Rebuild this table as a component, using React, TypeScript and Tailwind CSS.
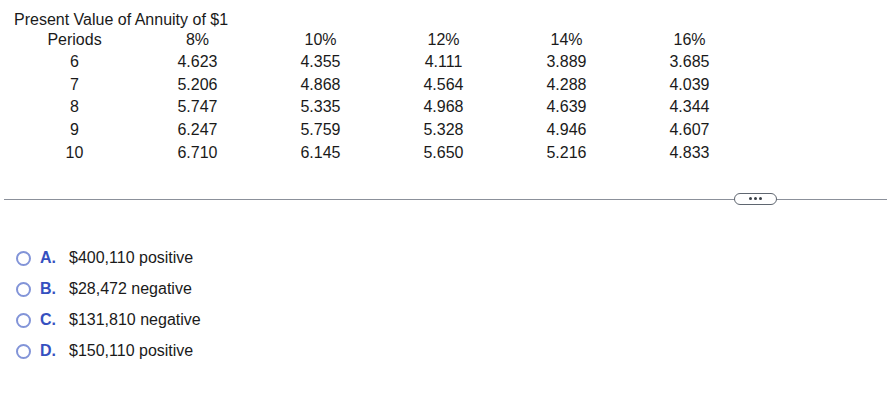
import React from "react";

const cols = ["8%", "10%", "12%", "14%", "16%"];
const rows: [string, string[]][] = [
  ["6", ["4.623", "4.355", "4.111", "3.889", "3.685"]],
  ["7", ["5.206", "4.868", "4.564", "4.288", "4.039"]],
  ["8", ["5.747", "5.335", "4.968", "4.639", "4.344"]],
  ["9", ["6.247", "5.759", "5.328", "4.946", "4.607"]],
  ["10", ["6.710", "6.145", "5.650", "5.216", "4.833"]],
];

const options = [
  ["A.", "$400,110 positive"],
  ["B.", "$28,472 negative"],
  ["C.", "$131,810 negative"],
  ["D.", "$150,110 positive"],
];

export default function App() {
  return (
    <div
      className="w-[887px] h-[417px] bg-white text-[16px] text-[#1a1a1a] overflow-hidden"
      style={{ fontFamily: '"Liberation Sans", Arial, sans-serif' }}
    >
      <div className="pt-[11px] pl-[14px] h-[30px] leading-[18px]">Present Value of Annuity of $1</div>
      <div className="pl-[13px]">
        <div className="flex h-[20px] items-center leading-[18px]">
          <div className="w-[123px] text-center">Periods</div>
          {cols.map((c) => (
            <div key={c} className="w-[123px] text-center">{c}</div>
          ))}
        </div>
        {rows.map(([p, vals]) => (
          <div key={p} className="flex h-[22.6px] items-center leading-[18px] pt-[2px]">
            <div className="w-[123px] text-center">{p}</div>
            {vals.map((v, i) => (
              <div key={i} className="w-[123px] text-center">{v}</div>
            ))}
          </div>
        ))}
      </div>
      <div className="relative mt-[36px] ml-[4px] h-px bg-[#8b909a]">
        <div className="absolute left-[730px] top-[-6px] w-[43px] h-[12px] rounded-full border border-[#5f6670] bg-white flex items-center justify-center gap-[2px]">
          <span className="w-[3px] h-[3px] rounded-full bg-[#3a3f47]" />
          <span className="w-[3px] h-[3px] rounded-full bg-[#3a3f47]" />
          <span className="w-[3px] h-[3px] rounded-full bg-[#3a3f47]" />
        </div>
      </div>
      <div className="mt-[43px] pl-[16px] flex flex-col">
        {options.map(([l, t]) => (
          <div key={l} className="flex items-center h-[31px]">
            <span className="w-[15px] h-[15px] rounded-full border-2 border-[#8294d8] box-border" />
            <span className="ml-[9px] w-[29px] font-bold text-[#3550c0]">{l}</span>
            <span>{t}</span>
          </div>
        ))}
      </div>
    </div>
  );
}
